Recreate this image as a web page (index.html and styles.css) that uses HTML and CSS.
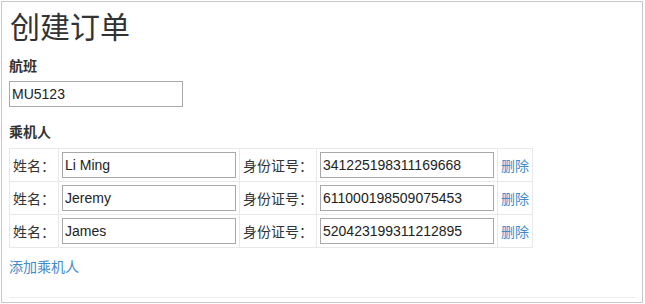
FILE: index.html
```html
<!DOCTYPE html>
<html lang="zh-CN">
<head>
  <meta charset="UTF-8" />
  <title>创建订单</title>
  <link rel="stylesheet" href="styles.css">
</head>
<body>
  <div id="order">
    <h1>创建订单</h1>

    <div class="field">
      <label class="title">航班</label>
      <input type="text" class="flight" value="MU5123" />
    </div>

    <div class="field list">
      <label class="title">乘机人</label>
      <table class="passengers">
        <tr>
          <td>姓名：</td>
          <td><input type="text" value="Li Ming" /></td>
          <td>身份证号：</td>
          <td><input type="text" value="341225198311169668" /></td>
          <td><a href="#">删除</a></td>
        </tr>
        <tr>
          <td>姓名：</td>
          <td><input type="text" value="Jeremy" /></td>
          <td>身份证号：</td>
          <td><input type="text" value="611000198509075453" /></td>
          <td><a href="#">删除</a></td>
        </tr>
        <tr>
          <td>姓名：</td>
          <td><input type="text" value="James" /></td>
          <td>身份证号：</td>
          <td><input type="text" value="520423199311212895" /></td>
          <td><a href="#">删除</a></td>
        </tr>
      </table>
    </div>

    <a href="#" class="add">添加乘机人</a>
    <div class="footer"></div>
  </div>
</body>
</html>
```

FILE: styles.css
```css
body {
  margin: 0;
  font-family: "Liberation Sans", "Noto Sans CJK SC", sans-serif;
  font-size: 14px;
  color: #333;
  background: #fff;
}

#order {
  box-sizing: border-box;
  width: 642px;
  height: 302px;
  margin: 1px 0 0 1px;
  padding: 0 7px;
  border: 1px solid #c8c8c8;
}

h1 {
  margin: 8px 0 10px 1px;
  font-size: 30px;
  font-weight: normal;
  line-height: 36px;
}

.field {
  margin-bottom: 15px;
}

.field.list {
  margin-bottom: 9px;
}

.title {
  display: block;
  font-weight: bold;
  line-height: 20px;
  margin-bottom: 5px;
}

input[type="text"] {
  box-sizing: border-box;
  height: 26px;
  padding: 0 2px;
  font-family: "Liberation Sans", sans-serif;
  font-size: 14px;
  color: #222;
  border: 1px solid #a9a9a9;
  outline: none;
}

.flight {
  width: 174px;
}

.passengers {
  border-collapse: collapse;
  margin-top: 6px;
}

.passengers td {
  border: 1px solid #e8e8e8;
  padding: 3px;
  white-space: nowrap;
}

.passengers input[type="text"] {
  width: 174px;
}

a {
  color: #428bca;
  text-decoration: none;
}

.add {
  display: inline-block;
  line-height: 20px;
}

.footer {
  margin-top: 20px;
  border-top: 1px solid #eee;
}
```
